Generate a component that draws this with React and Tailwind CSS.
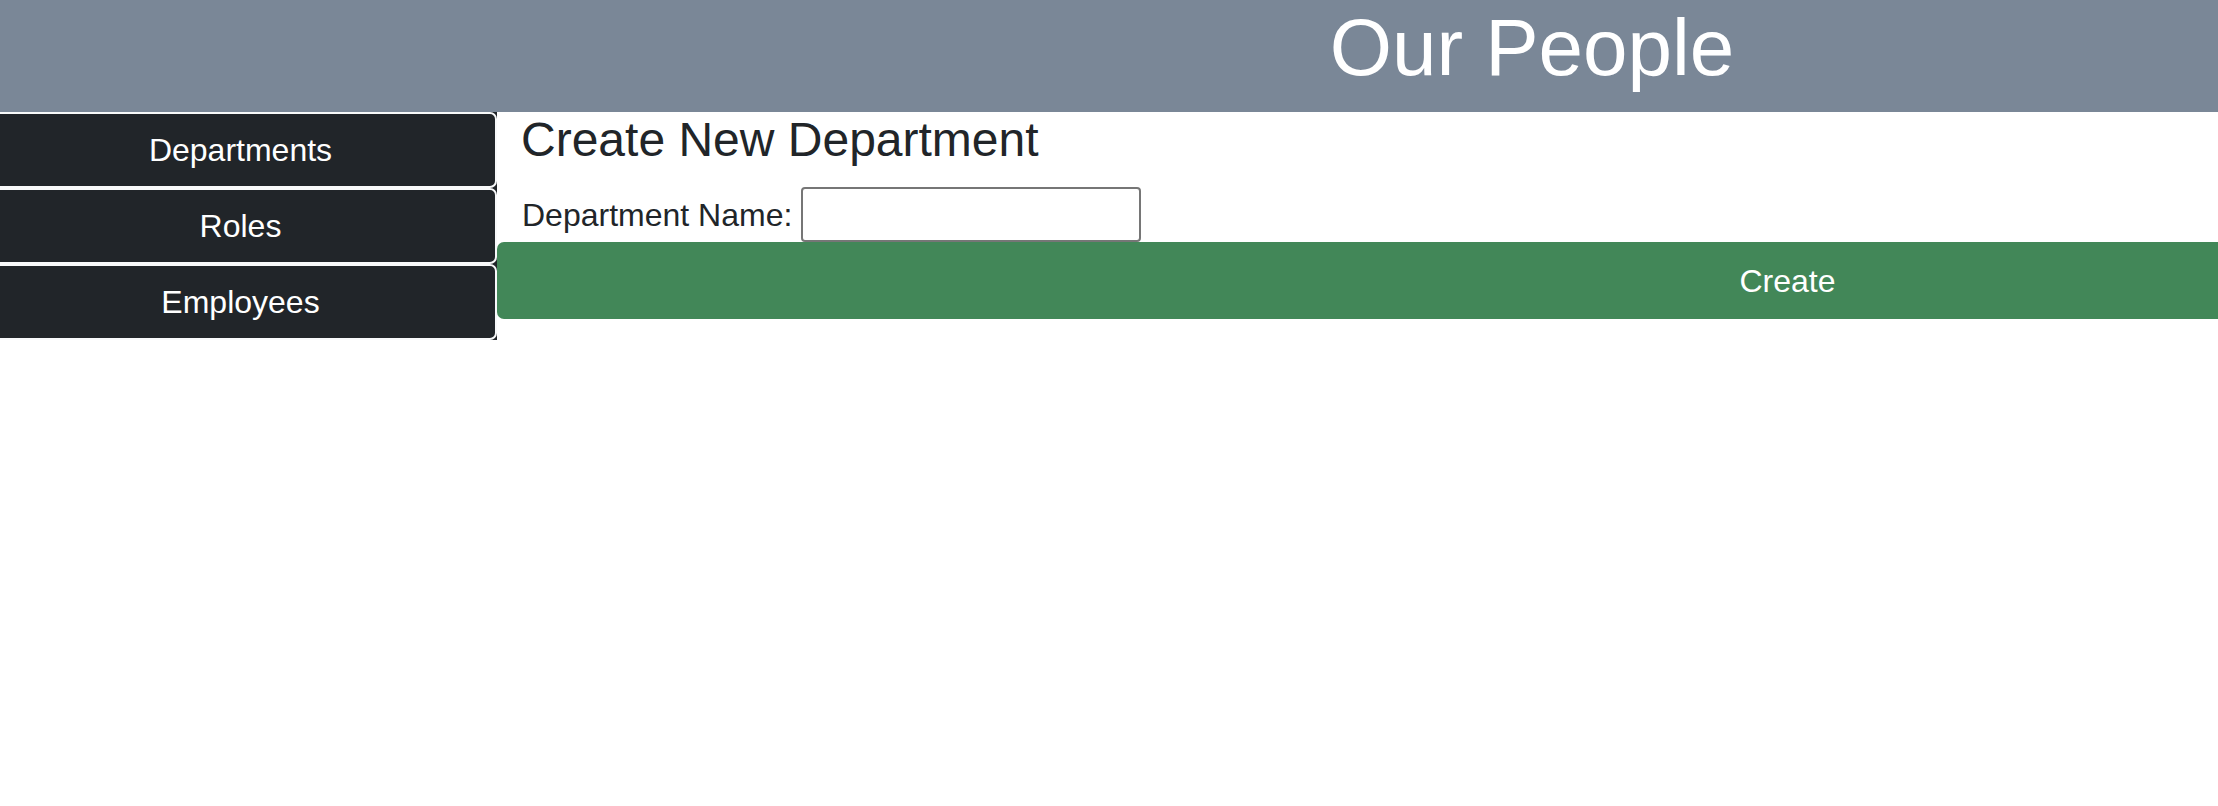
export default function App() {
  const items = ["Departments", "Roles", "Employees"];
  return (
    <div
      className="w-[2218px] overflow-hidden bg-white"
      style={{ fontFamily: '"Liberation Sans", Arial, Helvetica, sans-serif' }}
    >
      <div className="w-[3078px]">
        <header className="h-[112px] bg-[#7a8797] flex justify-center pr-[14px]">
          <h1 className="text-[80px] leading-[95px] text-white font-normal">Our People</h1>
        </header>
        <div className="flex items-start">
          <nav className="w-[497px] shrink-0 bg-[#212529] flex flex-col">
            {items.map((t) => (
              <button
                key={t}
                className="-ml-[16px] w-[513px] h-[76px] border-2 border-[#f8f9fa] rounded-[7px] bg-[#212529] text-white text-[32px] leading-none flex items-center justify-center"
              >
                {t}
              </button>
            ))}
          </nav>
          <main className="flex-1 flex flex-col">
            <h2 className="pl-6 text-[48px] leading-[55px] text-[#212529] font-normal">
              Create New Department
            </h2>
            <div className="pl-[25px] mt-[20px] flex items-center gap-[9px]">
              <label className="text-[32px] text-[#212529]">Department Name:</label>
              <input
                type="text"
                className="w-[340px] h-[55px] border-2 border-[#767676] rounded-[4px] bg-white"
              />
            </div>
            <button className="w-full h-[77px] rounded-[7px] bg-[#428758] text-white text-[32px] leading-none flex items-center justify-center">
              Create
            </button>
          </main>
        </div>
      </div>
    </div>
  );
}
